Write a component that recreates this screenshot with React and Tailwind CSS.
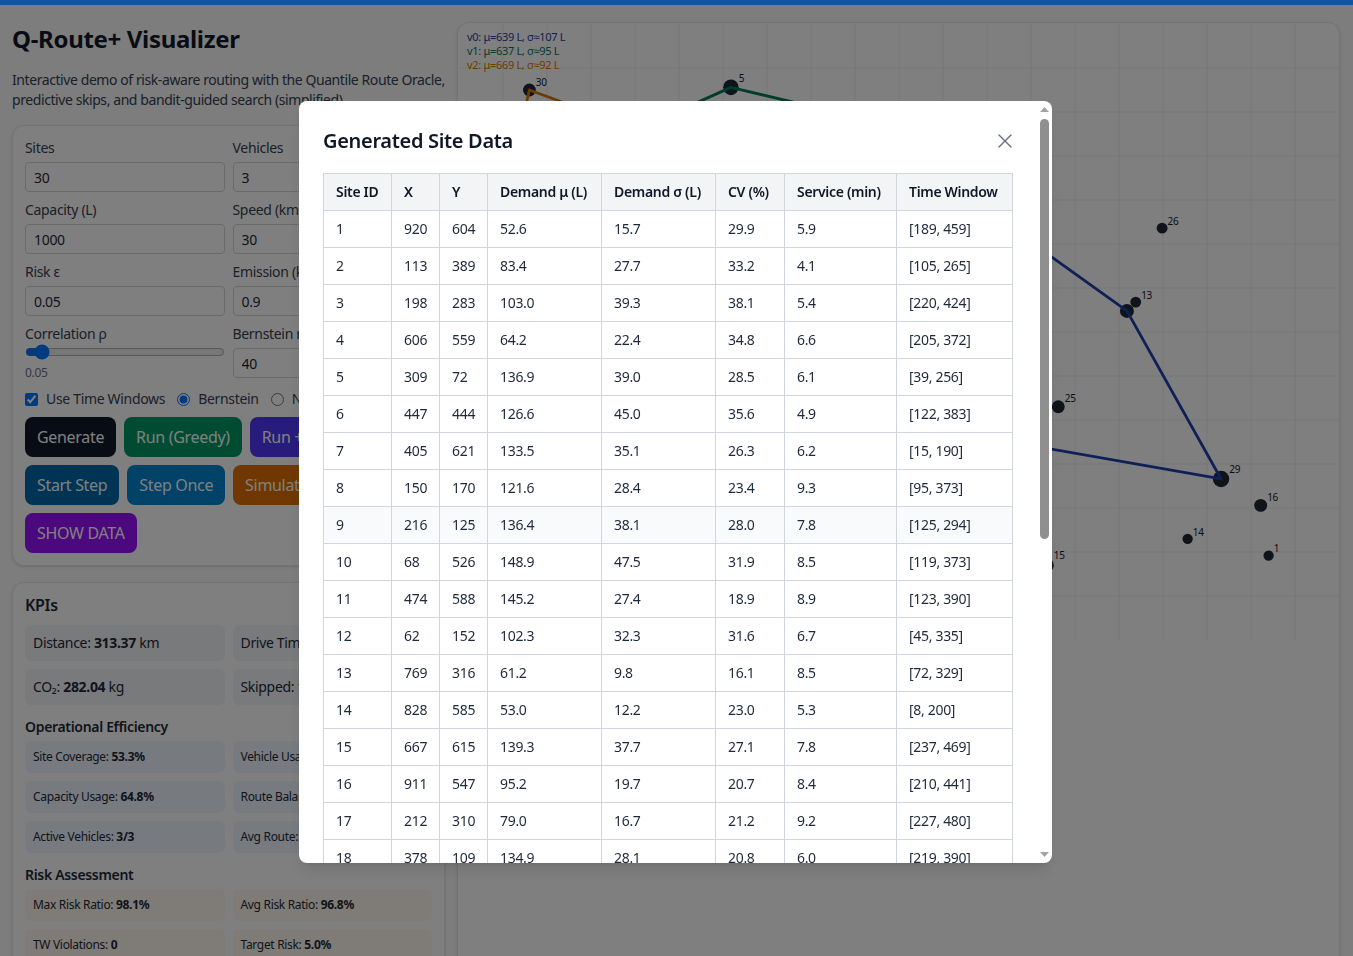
import React from 'react';
import { X } from 'lucide-react';

const SITES = [
  { id: 1, x: 920, y: 604, mu: 52.6, sd: 15.7, cv: 29.9, svc: 5.9, tw: [189, 459] },
  { id: 2, x: 113, y: 389, mu: 83.4, sd: 27.7, cv: 33.2, svc: 4.1, tw: [105, 265] },
  { id: 3, x: 198, y: 283, mu: 103.0, sd: 39.3, cv: 38.1, svc: 5.4, tw: [220, 424] },
  { id: 4, x: 606, y: 559, mu: 64.2, sd: 22.4, cv: 34.8, svc: 6.6, tw: [205, 372] },
  { id: 5, x: 309, y: 72, mu: 136.9, sd: 39.0, cv: 28.5, svc: 6.1, tw: [39, 256] },
  { id: 6, x: 447, y: 444, mu: 126.6, sd: 45.0, cv: 35.6, svc: 4.9, tw: [122, 383] },
  { id: 7, x: 405, y: 621, mu: 133.5, sd: 35.1, cv: 26.3, svc: 6.2, tw: [15, 190] },
  { id: 8, x: 150, y: 170, mu: 121.6, sd: 28.4, cv: 23.4, svc: 9.3, tw: [95, 373] },
  { id: 9, x: 216, y: 125, mu: 136.4, sd: 38.1, cv: 28.0, svc: 7.8, tw: [125, 294] },
  { id: 10, x: 68, y: 526, mu: 148.9, sd: 47.5, cv: 31.9, svc: 8.5, tw: [119, 373] },
  { id: 11, x: 474, y: 588, mu: 145.2, sd: 27.4, cv: 18.9, svc: 8.9, tw: [123, 390] },
  { id: 12, x: 62, y: 152, mu: 102.3, sd: 32.3, cv: 31.6, svc: 6.7, tw: [45, 335] },
  { id: 13, x: 769, y: 316, mu: 61.2, sd: 9.8, cv: 16.1, svc: 8.5, tw: [72, 329] },
  { id: 14, x: 828, y: 585, mu: 53.0, sd: 12.2, cv: 23.0, svc: 5.3, tw: [8, 200] },
  { id: 15, x: 667, y: 615, mu: 139.3, sd: 37.7, cv: 27.1, svc: 7.8, tw: [237, 469] },
  { id: 16, x: 911, y: 547, mu: 95.2, sd: 19.7, cv: 20.7, svc: 8.4, tw: [210, 441] },
  { id: 17, x: 212, y: 310, mu: 79.0, sd: 16.7, cv: 21.2, svc: 9.2, tw: [227, 480] },
  { id: 18, x: 378, y: 109, mu: 134.9, sd: 28.1, cv: 20.8, svc: 6.0, tw: [219, 390] },
  { id: 19, x: 180, y: 130, mu: 88.0, sd: 26.1, cv: 29.7, svc: 7.1, tw: [64, 301] },
  { id: 20, x: 520, y: 122, mu: 97.5, sd: 30.2, cv: 31.0, svc: 5.6, tw: [140, 402] },
  { id: 21, x: 590, y: 205, mu: 74.1, sd: 18.9, cv: 25.5, svc: 8.1, tw: [33, 287] },
  { id: 22, x: 300, y: 400, mu: 90.3, sd: 24.4, cv: 27.0, svc: 7.4, tw: [58, 244] },
  { id: 23, x: 540, y: 300, mu: 66.9, sd: 17.6, cv: 26.3, svc: 6.8, tw: [176, 430] },
  { id: 24, x: 480, y: 449, mu: 85.7, sd: 21.3, cv: 24.9, svc: 5.0, tw: [201, 455] },
  { id: 25, x: 681, y: 435, mu: 95.0, sd: 33.5, cv: 35.3, svc: 8.8, tw: [97, 318] },
  { id: 26, x: 799, y: 232, mu: 62.4, sd: 14.0, cv: 22.4, svc: 6.3, tw: [12, 236] },
  { id: 27, x: 350, y: 520, mu: 70.8, sd: 20.5, cv: 29.0, svc: 9.0, tw: [150, 398] },
  { id: 28, x: 120, y: 600, mu: 105.6, sd: 36.2, cv: 34.3, svc: 5.7, tw: [88, 341] },
  { id: 29, x: 866, y: 517, mu: 150.2, sd: 41.3, cv: 27.5, svc: 7.5, tw: [230, 478] },
  { id: 30, x: 80, y: 75, mu: 92.4, sd: 30.9, cv: 33.4, svc: 6.4, tw: [20, 270] },
];

// depot sits just under site 13
const DEPOT = { x: 759, y: 326 };

const ROUTES = [
  { name: 'v0', color: '#1e40af', mu: 639, sd: 107, stops: ['D', 21, 23, 24, 29, 'D'] },
  { name: 'v1', color: '#047857', mu: 637, sd: 95, stops: [18, 19, 5, 20, 6] },
  { name: 'v2', color: '#d97706', mu: 669, sd: 92, stops: [8, 12, 30, 9, 17] },
];

const SCALE = 0.88;
const W = 880;
const H = 616;

function RouteChart() {
  const byId = Object.fromEntries(SITES.map((s) => [s.id, s]));
  const px = (p) => [p.x * SCALE, p.y * SCALE];
  const rad = (s) => 3.5 + s.mu / 32;
  const grid = [];
  for (let g = 44; g < W; g += 44) grid.push(<line key={'v' + g} x1={g} y1={0} x2={g} y2={H} stroke="#eceef1" />);
  for (let g = 44; g < H; g += 44) grid.push(<line key={'h' + g} x1={0} y1={g} x2={W} y2={g} stroke="#eceef1" />);

  return (
    <svg width={W} height={H} className="block">
      {grid}
      <circle cx={DEPOT.x * SCALE} cy={DEPOT.y * SCALE} r={7} fill="#1f2937" />
      {SITES.map((s) => {
        const [cx, cy] = px(s);
        return <circle key={s.id} cx={cx} cy={cy} r={rad(s)} fill="#1f2937" />;
      })}
      {ROUTES.map((r) => {
        const pts = r.stops
          .map((id) => (id === 'D' ? DEPOT : byId[id]))
          .map((p) => px(p).join(','))
          .join(' ');
        return <polyline key={r.name} points={pts} fill="none" stroke={r.color} strokeWidth={2.8} strokeLinejoin="round" />;
      })}
      {SITES.map((s) => {
        const [cx, cy] = px(s);
        const r = rad(s);
        return (
          <text key={'t' + s.id} x={cx + r} y={cy - r + 2} fontSize={10} fill="#111827">
            {s.id}
          </text>
        );
      })}
      {ROUTES.map((r, i) => (
        <text key={'l' + r.name} x={8} y={17 + i * 14} fontSize={11} fill={r.color}>
          {r.name}: μ={r.mu} L, σ≈{r.sd} L
        </text>
      ))}
    </svg>
  );
}

function Field({ label, value }) {
  return (
    <div>
      <label className="block whitespace-nowrap text-sm leading-5 text-gray-700">{label}</label>
      <input
        readOnly
        value={value}
        className="mt-1 block h-[30px] w-full rounded border border-gray-300 bg-white px-2 text-sm text-gray-800"
      />
    </div>
  );
}

function Stat({ label, value, unit, tone = 'bg-gray-100', small }) {
  return (
    <div className={`whitespace-nowrap rounded-md px-2 py-2 text-gray-800 ${tone} ${small ? 'text-xs leading-4' : 'text-sm leading-5'}`}>
      {label}: <b className="font-bold">{value}</b>
      {unit ? ` ${unit}` : ''}
    </div>
  );
}

function Btn({ children, color }) {
  return <button className={`whitespace-nowrap rounded-lg px-3 py-2 text-base leading-6 text-white ${color}`}>{children}</button>;
}

function Scrollbar() {
  return (
    <div className="flex w-[15px] flex-col items-center pt-[6px] pb-[6px]">
      <svg width="9" height="5" viewBox="0 0 9 5">
        <path d="M0 5 L4.5 0 L9 5 Z" fill="#a3a3a3" />
      </svg>
      <div className="mt-[7px] h-[420px] w-[9px] rounded-full bg-[#8f8f8f]" />
      <div className="flex-1" />
      <svg width="9" height="5" viewBox="0 0 9 5">
        <path d="M0 0 L9 0 L4.5 5 Z" fill="#a3a3a3" />
      </svg>
    </div>
  );
}

function DataModal() {
  const cols = ['Site ID', 'X', 'Y', 'Demand μ (L)', 'Demand σ (L)', 'CV (%)', 'Service (min)', 'Time Window'];
  const widths = ['w-[68px]', 'w-[48px]', 'w-[48px]', 'w-[114px]', 'w-[114px]', 'w-[69px]', 'w-[112px]', 'w-[116px]'];
  const cell = 'border border-gray-300 px-3 py-2 leading-5 whitespace-nowrap';
  return (
    <div className="fixed inset-0 z-50 flex items-start justify-center bg-black/50 pt-[101px] pr-0.5">
      <div className="flex h-[762px] w-[753px] overflow-hidden rounded-lg bg-white shadow-lg">
        <div className="min-w-0 flex-1 overflow-hidden p-6">
          <div className="mb-4 flex h-8 items-center justify-between">
            <h2 className="text-xl font-semibold text-gray-900">Generated Site Data</h2>
            <button className="-mr-1 text-gray-500">
              <X size={24} strokeWidth={1.4} />
            </button>
          </div>
          <table className="w-[689px] table-fixed border-collapse text-sm text-gray-800">
            <colgroup>
              {widths.map((w, i) => (
                <col key={i} className={w} />
              ))}
            </colgroup>
            <thead>
              <tr className="bg-gray-100">
                {cols.map((c) => (
                  <th key={c} className={`${cell} text-left font-semibold text-gray-900`}>
                    {c}
                  </th>
                ))}
              </tr>
            </thead>
            <tbody>
              {SITES.map((s) => (
                <tr key={s.id} className={s.id === 9 ? 'bg-gray-50' : ''}>
                  <td className={cell}>{s.id}</td>
                  <td className={cell}>{s.x}</td>
                  <td className={cell}>{s.y}</td>
                  <td className={cell}>{s.mu.toFixed(1)}</td>
                  <td className={cell}>{s.sd.toFixed(1)}</td>
                  <td className={cell}>{s.cv.toFixed(1)}</td>
                  <td className={cell}>{s.svc.toFixed(1)}</td>
                  <td className={cell}>
                    [{s.tw[0]}, {s.tw[1]}]
                  </td>
                </tr>
              ))}
            </tbody>
          </table>
        </div>
        <Scrollbar />
      </div>
    </div>
  );
}

export default function App() {
  return (
    <div className="h-screen overflow-hidden bg-[#fafafa] font-['Noto_Sans',sans-serif] tracking-[-0.32px] text-gray-900">
      <div className="relative z-[60] h-[5px] bg-[#1553a0]" />
      <div className="grid grid-cols-[433px_883px] gap-3 px-3 pt-[17px]">
        <div>
          <h1 className="mt-px text-2xl font-bold leading-8">Q-Route+ Visualizer</h1>
          <p className="mt-[15px] text-sm leading-5 tracking-[-0.42px] text-gray-700">
            <span className="block whitespace-nowrap">Interactive demo of risk-aware routing with the Quantile Route Oracle,</span>
            <span className="block whitespace-nowrap">predictive skips, and bandit-guided search (simplified).</span>
          </p>

          <div className="mt-[15px] rounded-xl border border-gray-200 bg-white p-3 shadow-sm">
            <div className="grid grid-cols-2 gap-x-2 gap-y-2">
              <Field label="Sites" value="30" />
              <Field label="Vehicles" value="3" />
              <Field label="Capacity (L)" value="1000" />
              <Field label="Speed (km/h)" value="30" />
              <Field label="Risk ε" value="0.05" />
              <Field label="Emission (kg/km)" value="0.9" />
              <div>
                <label className="block text-sm leading-5 text-gray-700">Correlation ρ</label>
                <input type="range" min="0" max="1" step="0.05" defaultValue="0.05" className="block h-4 w-full" />
                <div className="mt-[5px] text-xs leading-4 text-gray-500">0.05</div>
              </div>
              <Field label="Bernstein rounds" value="40" />
            </div>

            <div className="mt-2 flex items-center whitespace-nowrap text-sm leading-5 text-gray-700">
              <label className="flex items-center gap-2">
                <input type="checkbox" defaultChecked />
                Use Time Windows
              </label>
              <label className="ml-3 flex items-center gap-2">
                <input type="radio" name="bound" defaultChecked />
                Bernstein
              </label>
              <label className="ml-3 flex items-center gap-2">
                <input type="radio" name="bound" />
                Normal
              </label>
            </div>

            <div className="mt-2 flex flex-wrap gap-2">
              <Btn color="bg-gray-900">Generate</Btn>
              <Btn color="bg-emerald-600">Run (Greedy)</Btn>
              <Btn color="bg-indigo-600">Run + Bandit</Btn>
              <Btn color="bg-sky-700">Start Step</Btn>
              <Btn color="bg-sky-600">Step Once</Btn>
              <Btn color="bg-amber-600">Simulate Day</Btn>
              <Btn color="bg-purple-600">SHOW DATA</Btn>
            </div>
          </div>

          <div className="mt-4 rounded-xl border border-gray-200 bg-white p-3 shadow-sm">
            <h2 className="text-base font-semibold leading-5 text-gray-800">KPIs</h2>
            <div className="mt-2.5 grid grid-cols-2 gap-2">
              <Stat label="Distance" value="313.37" unit="km" />
              <Stat label="Drive Time" value="10.45" unit="h" />
              <Stat label="CO₂" value="282.04" unit="kg" />
              <Stat label="Skipped" value="14" />
            </div>

            <h3 className="mt-3 text-sm font-semibold leading-5 text-gray-800">Operational Efficiency</h3>
            <div className="mt-1 grid grid-cols-2 gap-2">
              <Stat small tone="bg-blue-50" label="Site Coverage" value="53.3%" />
              <Stat small tone="bg-blue-50" label="Vehicle Usage" value="100.0%" />
              <Stat small tone="bg-blue-50" label="Capacity Usage" value="64.8%" />
              <Stat small tone="bg-blue-50" label="Route Balance" value="0.97" />
              <Stat small tone="bg-blue-50" label="Active Vehicles" value="3/3" />
              <Stat small tone="bg-blue-50" label="Avg Route" value="104.5" unit="km" />
            </div>

            <h3 className="mt-3 text-sm font-semibold leading-5 text-gray-800">Risk Assessment</h3>
            <div className="mt-1 grid grid-cols-2 gap-2">
              <Stat small tone="bg-orange-50" label="Max Risk Ratio" value="98.1%" />
              <Stat small tone="bg-orange-50" label="Avg Risk Ratio" value="96.8%" />
              <Stat small tone="bg-orange-50" label="TW Violations" value="0" />
              <Stat small tone="bg-orange-50" label="Target Risk" value="5.0%" />
            </div>
          </div>
        </div>

        <div className="h-[1100px] rounded-xl border border-gray-200 bg-white p-px shadow-sm">
          <RouteChart />
        </div>
      </div>

      <DataModal />
    </div>
  );
}
